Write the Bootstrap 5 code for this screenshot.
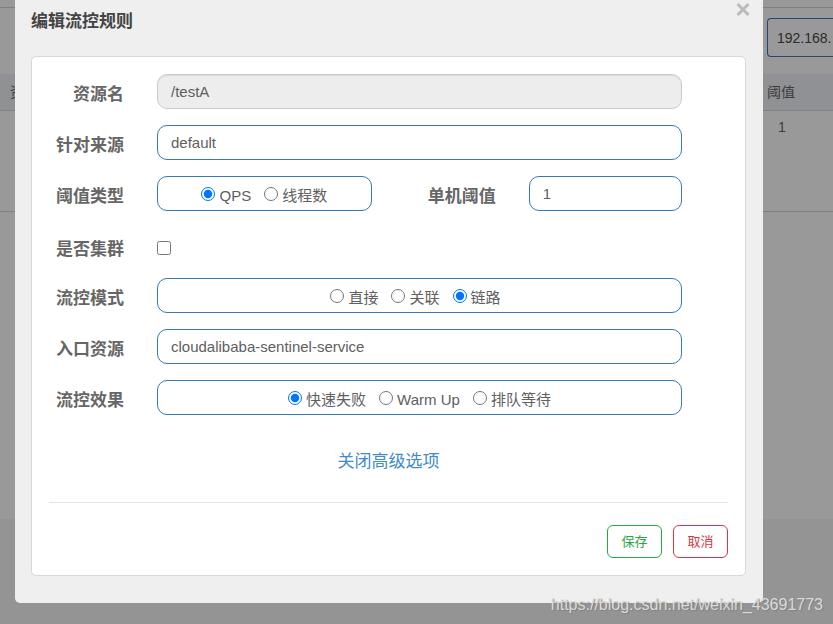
<!DOCTYPE html>
<html lang="zh-CN">
<head>
<meta charset="utf-8">
<meta name="viewport" content="width=device-width, initial-scale=1">
<title>编辑流控规则</title>
<link href="https://cdn.jsdelivr.net/npm/bootstrap@5.3.0/dist/css/bootstrap.min.css" rel="stylesheet">
<style>
  body { font-family: "Liberation Sans", "Noto Sans CJK SC", sans-serif; font-size: 15px; line-height: 20px; color: #606060; background: #949494; }
  .backdrop-page { background: #949494; }
  .page-main { background: #999; min-height: 519px; color: #3c3c3c; font-size: 14px; }
  .page-top { height: 8px; border-bottom: 1px solid #808080; }
  .page-filter { height: 66px; padding-top: 10px; }
  .machine-box { width: 66px; height: 39px; padding: 0 0 0 9px; border: 1px solid #1f4a72; border-right: 0; border-radius: 4px 0 0 4px; background: #999; color: #2b2b2b; font-size: 14px; }
  .rules { table-layout: fixed; border-collapse: collapse; }
  .rules th { height: 36px; padding: 0; background: #8f9194; font-weight: 400; border-bottom: 1px solid #808080; }
  .rules td { height: 101px; padding: 6px 0 0; vertical-align: top; border-bottom: 1px solid #808080; }
  .rules th:first-child { padding-left: 10px; }
  .rules td:last-child { padding-left: 11px; }
  .col-limit { width: 66px; }
  .dialog-layer { padding: 0 70px 0 15px; }
  .dialog-box { background: #efefef; border-radius: 0 0 5px 5px; padding: 0 17px 27px 16px; }
  .dialog-head { height: 56px; padding-top: 12px; }
  .dialog-title { font-size: 17px; font-weight: 700; line-height: 20px; color: #444; }
  .close-x { width: 20px; height: 20px; margin: -13px -7px 0 0; color: #bbb; }
  .form-panel { border: 1px solid #d8d8d8; border-radius: 5px; padding: 17px; }
  .rule-rows { gap: 16px; padding-right: 46px; }
  .rule-row { gap: 33px; min-height: 35px; }
  .rule-label { width: 75px; flex: none; padding-top: 6px; text-align: right; font-size: 17px; font-weight: 700; color: #666; }
  .threshold-pair { display: grid; grid-template-columns: minmax(0, 7fr) 124px minmax(0, 5fr); align-items: center; }
  .threshold-pair .rule-label { width: 124px; }
  .threshold-pair { grid-template-columns: minmax(0, 7fr) 157px minmax(0, 5fr); }
  .field-box { min-width: 0; height: 35px; border: 1px solid #337ab7; border-radius: 10px; background: #fff; color: #606060; font-size: 15px; }
  input.field-box { padding: 0 13px; outline: 0; }
  input.field-box[readonly] { background: #ededed; border-color: #ccc; box-shadow: inset 0 1px 1px rgba(0, 0, 0, .08); }
  .option-group { gap: 13px; padding-top: 5px; }
  .option-item { gap: 4px; }
  .option-item input { width: 14px; height: 14px; margin: -4px 0 0; }
  .tick { width: 14px; height: 14px; margin: 2px 0 0; }
  .toggle-row { padding: 37px 0 30px; }
  .toggle-link { font-size: 17px; color: #428bca; }
  .divider { border-top: 1px solid #e4e4e4; padding-top: 22px; gap: 11px; }
  .action { width: 55px; height: 33px; padding: 0; font-size: 13px; background: #fff; }
  .action-save { color: #28a745; border-color: #28a745; }
  .action-cancel { color: #dc3545; border-color: #dc3545; }
  .watermark { right: 10px; bottom: 9px; font-size: 16px; line-height: 20px; color: #dadada; text-shadow: 1px 1px 1px #808080; }
</style>
</head>
<body>
<div class="backdrop-page position-relative overflow-hidden min-vh-100">
  <main class="page-main">
    <div class="page-top"></div>
    <div class="page-filter d-flex justify-content-end">
      <input class="machine-box" type="text" value="192.168." aria-label="机器">
    </div>
    <table class="rules w-100">
      <colgroup><col><col class="col-limit"></colgroup>
      <thead><tr><th>资源名</th><th>阈值</th></tr></thead>
      <tbody><tr><td></td><td>1</td></tr></tbody>
    </table>
  </main>

  <div class="dialog-layer position-absolute top-0 start-0 w-100">
    <section class="dialog-box" role="dialog" aria-labelledby="dialog-title">
      <header class="dialog-head d-flex justify-content-between align-items-start">
        <h1 class="dialog-title mb-0" id="dialog-title">编辑流控规则</h1>
        <button type="button" class="close-x btn p-0 border-0 d-flex align-items-center justify-content-center" aria-label="关闭">
          <svg width="14" height="14" viewBox="0 0 14 14" fill="none" stroke="currentColor" stroke-width="3"><path d="M1.5 2L12.5 13M12.5 2L1.5 13"/></svg>
        </button>
      </header>
      <form class="form-panel bg-white">
        <div class="rule-rows d-flex flex-column">
          <div class="rule-row d-flex align-items-center">
            <label class="rule-label" for="resource">资源名</label>
            <input class="field-box flex-grow-1" id="resource" type="text" value="/testA" readonly>
          </div>
          <div class="rule-row d-flex align-items-center">
            <label class="rule-label" for="origin">针对来源</label>
            <input class="field-box flex-grow-1" id="origin" type="text" value="default">
          </div>
          <div class="rule-row d-flex align-items-center">
            <span class="rule-label" id="grade-label">阈值类型</span>
            <div class="threshold-pair flex-grow-1">
              <div class="field-box option-group d-flex align-items-center justify-content-center" role="radiogroup" aria-labelledby="grade-label">
                <label class="option-item d-flex align-items-center"><input type="radio" name="grade" checked>QPS</label>
                <label class="option-item d-flex align-items-center"><input type="radio" name="grade">线程数</label>
              </div>
              <label class="rule-label" for="count">单机阈值</label>
              <input class="field-box" id="count" type="text" value="1">
            </div>
          </div>
          <div class="rule-row d-flex align-items-center pt-1">
            <label class="rule-label" for="cluster">是否集群</label>
            <input class="tick" id="cluster" type="checkbox">
          </div>
          <div class="rule-row d-flex align-items-center">
            <span class="rule-label" id="mode-label">流控模式</span>
            <div class="field-box flex-grow-1 option-group d-flex align-items-center justify-content-center pe-2" role="radiogroup" aria-labelledby="mode-label">
              <label class="option-item d-flex align-items-center"><input type="radio" name="mode">直接</label>
              <label class="option-item d-flex align-items-center"><input type="radio" name="mode">关联</label>
              <label class="option-item d-flex align-items-center"><input type="radio" name="mode" checked>链路</label>
            </div>
          </div>
          <div class="rule-row d-flex align-items-center">
            <label class="rule-label" for="entry">入口资源</label>
            <input class="field-box flex-grow-1" id="entry" type="text" value="cloudalibaba-sentinel-service">
          </div>
          <div class="rule-row d-flex align-items-center">
            <span class="rule-label" id="effect-label">流控效果</span>
            <div class="field-box flex-grow-1 option-group d-flex align-items-center justify-content-center" role="radiogroup" aria-labelledby="effect-label">
              <label class="option-item d-flex align-items-center"><input type="radio" name="effect" checked>快速失败</label>
              <label class="option-item d-flex align-items-center"><input type="radio" name="effect">Warm Up</label>
              <label class="option-item d-flex align-items-center"><input type="radio" name="effect">排队等待</label>
            </div>
          </div>
        </div>
        <div class="toggle-row text-center">
          <a class="toggle-link text-decoration-none" href="#">关闭高级选项</a>
        </div>
        <div class="divider d-flex justify-content-end">
          <button type="button" class="btn action action-save">保存</button>
          <button type="button" class="btn action action-cancel">取消</button>
        </div>
      </form>
    </section>
  </div>

  <div class="watermark position-absolute">https://blog.csdn.net/weixin_43691773</div>
</div>
<script src="https://cdn.jsdelivr.net/npm/bootstrap@5.3.0/dist/js/bootstrap.bundle.min.js"></script>
</body>
</html>
